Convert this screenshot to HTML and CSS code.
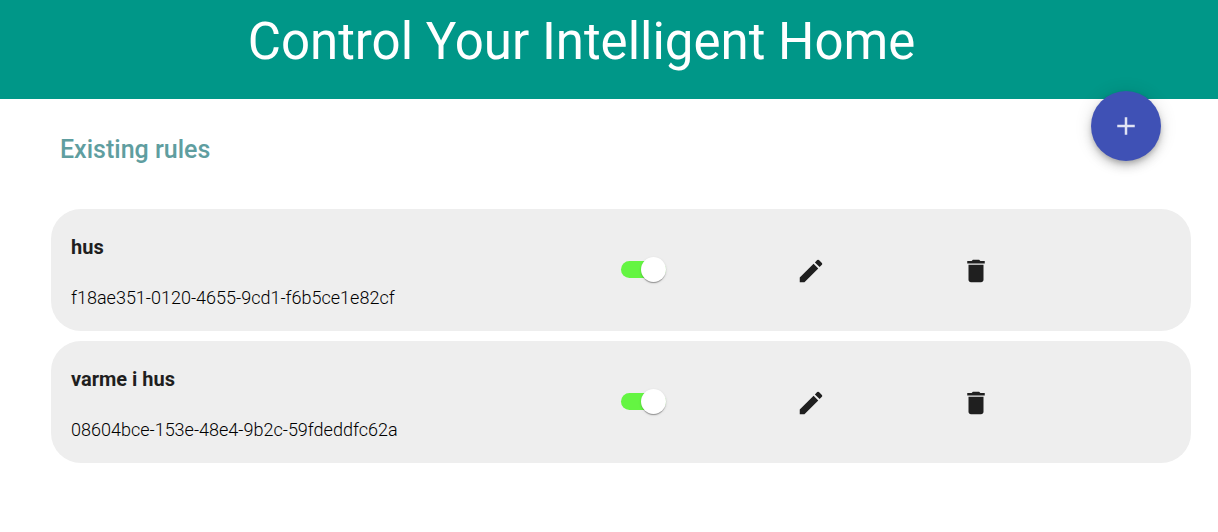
FILE: index.html
```html
<!DOCTYPE html>
<html lang="en">
<head>
<meta charset="utf-8">
<meta name="viewport" content="width=device-width, initial-scale=1">
<title>Control Your Intelligent Home</title>
<link rel="stylesheet" href="styles.css">
</head>
<body>
<header class="banner">
  <h1 class="banner-title">Control Your Intelligent Home</h1>
  <button class="fab" type="button" aria-label="Add rule">
    <svg class="icon" viewBox="0 0 24 24" aria-hidden="true"><path d="M19 13h-6v6h-2v-6H5v-2h6V5h2v6h6v2z"/></svg>
  </button>
</header>
<main class="rules">
  <h2 class="rules-title">Existing rules</h2>
  <ul class="rule-list">
    <li class="rule">
      <div class="rule-info">
        <h3 class="rule-name" id="rule-1">hus</h3>
        <p class="rule-id">f18ae351-0120-4655-9cd1-f6b5ce1e82cf</p>
      </div>
      <input class="switch" type="checkbox" role="switch" aria-labelledby="rule-1" checked>
      <button class="icon-button" type="button" aria-label="Edit hus">
        <svg class="icon" viewBox="0 0 24 24" aria-hidden="true"><path d="M3 17.25V21h3.75L17.81 9.94l-3.75-3.75L3 17.25zM20.71 7.04a1 1 0 0 0 0-1.41l-2.34-2.34a1 1 0 0 0-1.41 0l-1.83 1.83 3.75 3.75 1.83-1.83z"/></svg>
      </button>
      <button class="icon-button" type="button" aria-label="Delete hus">
        <svg class="icon" viewBox="0 0 24 24" aria-hidden="true"><path d="M6 19c0 1.1.9 2 2 2h8c1.1 0 2-.9 2-2V7H6v12zM19 4h-3.5l-1-1h-5l-1 1H5v2h14V4z"/></svg>
      </button>
    </li>
    <li class="rule">
      <div class="rule-info">
        <h3 class="rule-name" id="rule-2">varme i hus</h3>
        <p class="rule-id">08604bce-153e-48e4-9b2c-59fdeddfc62a</p>
      </div>
      <input class="switch" type="checkbox" role="switch" aria-labelledby="rule-2" checked>
      <button class="icon-button" type="button" aria-label="Edit varme i hus">
        <svg class="icon" viewBox="0 0 24 24" aria-hidden="true"><path d="M3 17.25V21h3.75L17.81 9.94l-3.75-3.75L3 17.25zM20.71 7.04a1 1 0 0 0 0-1.41l-2.34-2.34a1 1 0 0 0-1.41 0l-1.83 1.83 3.75 3.75 1.83-1.83z"/></svg>
      </button>
      <button class="icon-button" type="button" aria-label="Delete varme i hus">
        <svg class="icon" viewBox="0 0 24 24" aria-hidden="true"><path d="M6 19c0 1.1.9 2 2 2h8c1.1 0 2-.9 2-2V7H6v12zM19 4h-3.5l-1-1h-5l-1 1H5v2h14V4z"/></svg>
      </button>
    </li>
  </ul>
</main>
</body>
</html>
```

FILE: styles.css
```css
* {
  box-sizing: border-box;
}

body,
h1,
h2,
h3,
p,
ul {
  margin: 0;
  padding: 0;
}

body {
  background: #fff;
  color: #1f1f1f;
  font-family: Roboto, "Liberation Sans", sans-serif;
}

button {
  border: 0;
  padding: 0;
  color: inherit;
  background: none;
  cursor: pointer;
}

.icon {
  display: block;
  width: 30px;
  height: 30px;
  fill: currentColor;
}

.banner {
  position: relative;
  padding: 12px 55px 27px 0;
  background: #009788;
  color: #fff;
  text-align: center;
}

.banner-title {
  font-size: 51px;
  font-weight: 400;
  line-height: 60px;
}

.fab {
  position: absolute;
  right: 57px;
  bottom: -62px;
  display: flex;
  align-items: center;
  justify-content: center;
  width: 70px;
  height: 70px;
  border-radius: 50%;
  background: #3f51b5;
  color: #e0e3f4;
  box-shadow: 0 3px 5px -1px rgba(0, 0, 0, 0.2), 0 6px 10px 0 rgba(0, 0, 0, 0.14), 0 1px 18px 0 rgba(0, 0, 0, 0.12);
}

.rules {
  padding: 36px 27px 40px 51px;
}

.rules-title {
  padding-left: 9px;
  color: #5f9ea0;
  font-size: 25px;
  font-weight: 500;
  line-height: 30px;
}

.rule-list {
  display: grid;
  gap: 10px;
  margin-top: 44px;
  list-style: none;
}

.rule {
  display: grid;
  grid-template-columns: 10fr 3fr 3fr 4fr;
  align-items: center;
  padding: 20px;
  border-radius: 30px;
  background: #eee;
}

.rule-info {
  display: grid;
  gap: 25px;
  padding: 4px 0 1px;
}

.rule-name {
  font-size: 20px;
  font-weight: 700;
  line-height: 28px;
}

.rule-id {
  color: #000;
  font-size: 18px;
  font-weight: 300;
  line-height: 24px;
}

.switch {
  appearance: none;
  display: flex;
  align-items: center;
  justify-content: flex-end;
  width: 45px;
  height: 17px;
  margin: 0 0 2px;
  border-radius: 9px;
  background: #bdbdbd;
  cursor: pointer;
}

.switch:checked {
  background: #64f542;
}

.switch::before {
  content: "";
  flex: none;
  width: 25px;
  height: 25px;
  border-radius: 50%;
  background: #fff;
  box-shadow: 0 2px 1px -1px rgba(0, 0, 0, 0.2), 0 1px 1px 0 rgba(0, 0, 0, 0.14), 0 1px 3px 0 rgba(0, 0, 0, 0.12);
}

.icon-button {
  justify-self: start;
  margin: 2px 0 0 10px;
}
```
